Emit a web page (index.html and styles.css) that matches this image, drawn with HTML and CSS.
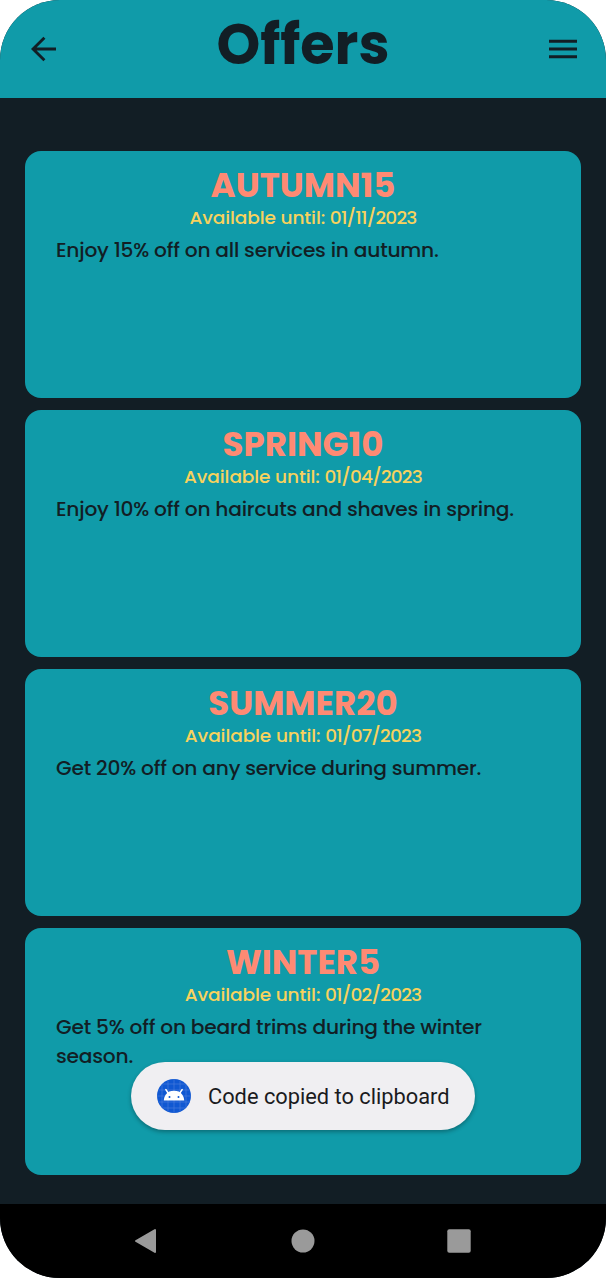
FILE: index.html
```html
<!DOCTYPE html>
<html lang="en">
<head>
<meta charset="utf-8">
<title>Offers</title>
<link rel="stylesheet" href="styles.css">
</head>
<body>
<div class="phone">
  <header class="topbar">
    <svg class="back" viewBox="0 0 26 26" width="26" height="26"><path d="M25 13H2M13.4 1.7L2 13l11.4 11.3" fill="none" stroke="currentColor" stroke-width="2.9"/></svg>
    <h1 class="title">Offers</h1>
    <svg class="menu" viewBox="0 0 28 20" width="28" height="20"><path d="M0 2.2h28M0 10h28M0 17.8h28" fill="none" stroke="currentColor" stroke-width="3"/></svg>
  </header>
  <main class="offers">
    <article class="card">
      <h2 class="code">AUTUMN15</h2>
      <p class="until">Available until: <span class="date">01/11/2023</span></p>
      <p class="desc">Enjoy 15% off on all services in autumn.</p>
    </article>
    <article class="card">
      <h2 class="code">SPRING10</h2>
      <p class="until">Available until: <span class="date">01/04/2023</span></p>
      <p class="desc">Enjoy 10% off on haircuts and shaves in spring.</p>
    </article>
    <article class="card">
      <h2 class="code">SUMMER20</h2>
      <p class="until">Available until: <span class="date">01/07/2023</span></p>
      <p class="desc">Get 20% off on any service during summer.</p>
    </article>
    <article class="card">
      <h2 class="code">WINTER5</h2>
      <p class="until">Available until: <span class="date">01/02/2023</span></p>
      <p class="desc">Get 5% off on beard trims during the winter<br>season.</p>
    </article>
  </main>
  <nav class="navbar">
    <svg viewBox="0 0 24 26" width="24" height="26"><path d="M2 13L21 2v22z" fill="currentColor" stroke="currentColor" stroke-width="2" stroke-linejoin="round"/></svg>
    <svg viewBox="0 0 24 24" width="24" height="24"><circle cx="12" cy="12" r="11.5" fill="currentColor"/></svg>
    <svg viewBox="0 0 24 24" width="24" height="24"><rect x=".3" y=".3" width="23.4" height="23.4" rx="2" fill="currentColor"/></svg>
  </nav>
  <div class="toast">
    <svg class="droid" viewBox="0 0 34 34" width="34" height="34">
      <circle cx="17" cy="17" r="17" fill="#1058d2"/>
      <path d="M5 5.5v23M11 1.5v31M17 0v34M23 1.5v31M29 5.5v23M5.5 5h23M1.5 11h31M0 17h34M1.5 23h31M5.5 29h23" stroke="#4d80dd" stroke-width=".6"/>
      <path d="M8.9 10.6l2.6 4M25.1 10.6l-2.6 4" stroke="#fff" stroke-width="1.6" stroke-linecap="round"/>
      <path d="M6.7 21.6c.4-4.4 2.5-7.6 5.5-9 3-1.3 6.6-1.3 9.6 0 3 1.4 5.1 4.6 5.5 9z" fill="#fff"/>
      <circle cx="12.5" cy="17.9" r="1" fill="#1058d2"/><circle cx="21.5" cy="17.9" r="1" fill="#1058d2"/>
    </svg>
    <span>Code copied to clipboard</span>
  </div>
</div>
</body>
</html>
```
FILE: styles.css
```css
* { box-sizing: border-box; }
body { margin: 0; background: #fff; }
h1, h2, p { margin: 0; }
.phone {
  position: relative;
  display: flex;
  flex-direction: column;
  width: 606px;
  height: 1278px;
  overflow: hidden;
  border-radius: 60px;
  background: #121e25;
  color: #121e25;
  font-family: Poppins, Inter, sans-serif;
}
.topbar {
  display: flex;
  align-items: center;
  justify-content: space-between;
  height: 98px;
  padding: 0 29px 0 31px;
  background: #109ba9;
}
.title { font-size: 55.7px; line-height: 60px; font-weight: 700; padding-bottom: 9px; }
.offers {
  flex: 1;
  display: flex;
  flex-direction: column;
  gap: 12px;
  padding: 53px 25px 0;
}
.card {
  height: 247px;
  padding: 15px 31px;
  border-radius: 16px;
  background: #109ba9;
}
.code { text-align: center; color: #ff8a73; font-size: 34px; line-height: 38px; font-weight: 700; }
.until {
  margin-top: 2px;
  text-align: center;
  color: #f8d25d;
  font-size: 18.5px;
  font-weight: 500;
  line-height: 24px;
  letter-spacing: -.1px;
}
.date { letter-spacing: -.78px; }
.desc {
  margin-top: 6px;
  font-size: 20.2px;
  font-weight: 500;
  line-height: 28.5px;
  letter-spacing: -.21px;
  white-space: nowrap;
}
.navbar {
  display: flex;
  align-items: center;
  justify-content: space-between;
  height: 74px;
  padding: 0 135px 0 134px;
  background: #000;
  color: #9a9a9a;
}
.toast {
  position: absolute;
  left: 131px;
  top: 1062px;
  display: flex;
  align-items: center;
  gap: 17px;
  width: 344px;
  height: 68px;
  padding-left: 26px;
  border-radius: 34px;
  background: #f0eff2;
  box-shadow: 0 2px 4px rgba(0, 0, 0, .3);
  color: #1b1b1e;
  font: 21.8px/28px Roboto, sans-serif;
  white-space: nowrap;
}
.toast span { padding-top: 2px; }
```
